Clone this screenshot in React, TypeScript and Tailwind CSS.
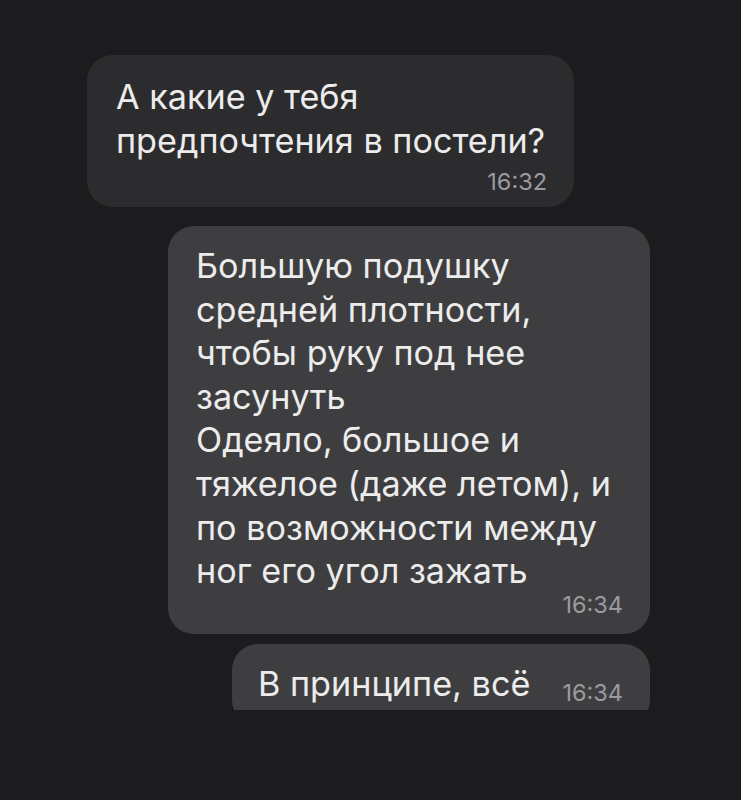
import React from "react";

const font = { fontFamily: "Inter, 'Noto Sans', sans-serif" };

const Time: React.FC<{ value: string; className?: string }> = ({ value, className }) => (
  <span className={"text-[23.5px] leading-[24px] text-[#9a9a9f] " + (className || "")}>{value}</span>
);

export default function App() {
  return (
    <div className="h-[800px] w-[741px] bg-[#1c1c1e] text-[#ececec]" style={font}>
      <div className="h-[710px] overflow-hidden pl-[87px] pr-[91px] pt-[55px] flex flex-col">
        {/* incoming */}
        <div className="self-start w-[487px] rounded-[26px] bg-[#2c2c2e] pl-[29px] pr-[27px] pt-[20px] pb-[13px]">
          <div className="text-[34.2px] leading-[44px]">
            А какие у тебя
            <br />
            предпочтения в постели?
          </div>
          <div className="flex justify-end mt-[7px]">
            <Time value="16:32" />
          </div>
        </div>

        {/* outgoing */}
        <div className="self-end mt-[19px] w-[482px] rounded-[26px] bg-[#3e3e41] pl-[28px] pr-[27px] pt-[18px] pb-[17px]">
          <div className="text-[34.2px] leading-[43.6px]">
            Большую подушку
            <br />
            средней плотности,
            <br />
            чтобы руку под нее
            <br />
            засунуть
            <br />
            Одеяло, большое и
            <br />
            тяжелое (даже летом), и
            <br />
            по возможности между
            <br />
            ног его угол зажать
          </div>
          <div className="flex justify-end">
            <Time value="16:34" />
          </div>
        </div>

        <div className="self-end mt-[10px] w-[418px] rounded-[26px] bg-[#3e3e41] pl-[26px] pr-[27px] pt-[18px] pb-[20px] flex items-start">
          <span className="text-[34.2px] leading-[44px]">В принципе, всё</span>
          <Time value="16:34" className="ml-auto mt-[19px]" />
        </div>
      </div>
    </div>
  );
}
